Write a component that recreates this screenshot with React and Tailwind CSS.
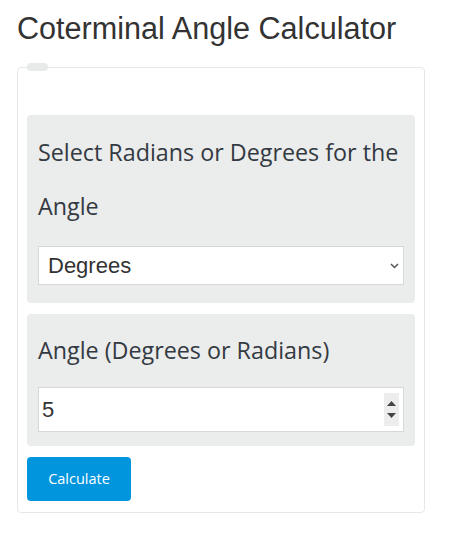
import { useState } from "react";

const App = () => {
  const [unit, setUnit] = useState("Degrees");
  const [angle, setAngle] = useState("5");

  return (
    <div className="min-h-[535px] w-[450px] bg-white px-[17px] pt-[8px]" style={{ fontFamily: "'Liberation Sans', Arial, sans-serif" }}>
      <h1 className="text-[30.6px] leading-[40px] text-[#333333]">Coterminal Angle Calculator</h1>
      <div className="relative mt-[19px] w-[408px] rounded-[4px] border border-[#e6e8e8] px-[9px] pb-[11px] pt-[47px]">
        <span className="absolute left-[9px] top-[-5px] h-[8px] w-[21px] rounded-full bg-[#e8eaea]" />
        <div className="rounded-[4px] bg-[#ebecec] px-[11px] pb-[18px] pt-[10px]">
          <label className="block text-[23.3px] leading-[54px] text-[#333a42]" style={{ fontFamily: "'Open Sans', sans-serif" }}>
            Select Radians or Degrees for the Angle
          </label>
          <div className="relative mt-[13px]">
            <select
              value={unit}
              onChange={(e) => setUnit(e.target.value)}
              className="h-[39px] w-full appearance-none border border-[#d6d8d8] bg-white px-[9px] text-[22px] text-[#333333]"
            >
              <option>Degrees</option>
              <option>Radians</option>
            </select>
            <svg className="pointer-events-none absolute right-[5px] top-[17px] h-[6px] w-[9px]" viewBox="0 0 9 6" fill="none">
              <path d="M1 1l3.5 3.5L8 1" stroke="#555" strokeWidth="1.5" />
            </svg>
          </div>
        </div>
        <div className="mt-[11px] rounded-[4px] bg-[#ebecec] px-[11px] pb-[14px] pt-[9px]">
          <label className="block text-[23.3px] leading-[54px] text-[#333a42]" style={{ fontFamily: "'Open Sans', sans-serif" }}>
            Angle (Degrees or Radians)
          </label>
          <div className="relative mt-[10px]">
            <input
              type="number"
              value={angle}
              onChange={(e) => setAngle(e.target.value)}
              className="h-[45px] w-full border border-[#d6d8d8] bg-white px-[3px] text-[22px] text-[#333333] [appearance:textfield] [&::-webkit-inner-spin-button]:appearance-none [&::-webkit-outer-spin-button]:appearance-none"
            />
            <div className="pointer-events-none absolute right-[5px] top-[6px] flex h-[33px] w-[15px] flex-col items-center justify-center gap-[7px] bg-[#ededed]">
              <svg className="h-[5px] w-[9px]" viewBox="0 0 9 5"><path d="M0 5L4.5 0L9 5z" fill="#444" /></svg>
              <svg className="h-[5px] w-[9px]" viewBox="0 0 9 5"><path d="M0 0L4.5 5L9 0z" fill="#444" /></svg>
            </div>
          </div>
        </div>
        <button className="mt-[11px] h-[44px] w-[104px] rounded-[4px] bg-[#0095dd] text-[14.5px] text-white" style={{ fontFamily: "'Open Sans', sans-serif" }}>
          Calculate
        </button>
      </div>
    </div>
  );
};

export default App;
